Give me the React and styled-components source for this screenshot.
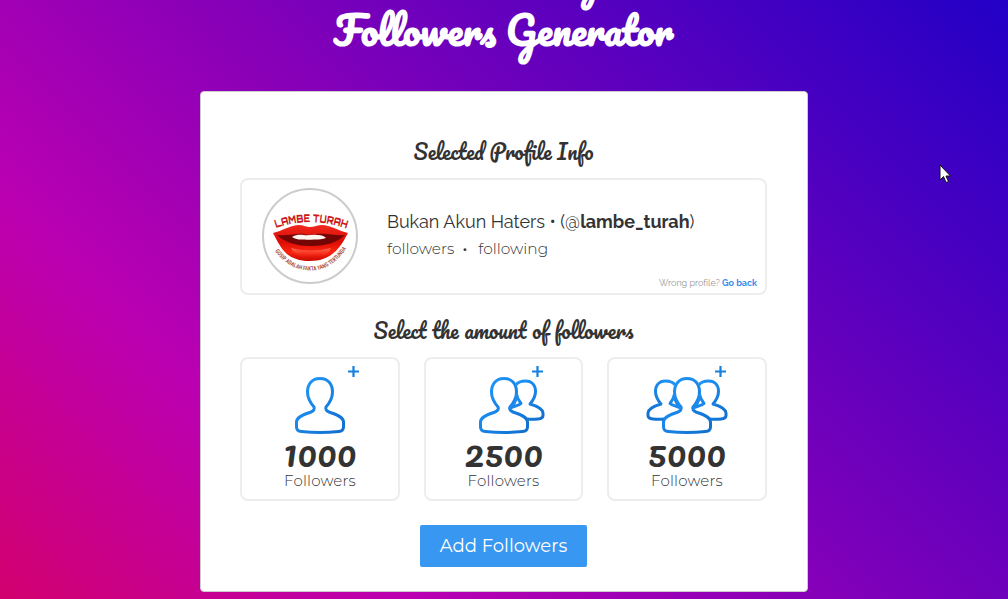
import React from "react";
import styled, { createGlobalStyle } from "styled-components";

const GlobalStyle = createGlobalStyle`
  * {
    box-sizing: border-box;
  }

  body {
    margin: 0;
    height: 599px;
    overflow: hidden;
    background: linear-gradient(45deg, #d2006e 0%, #bb00b1 25%, #2200c6 100%);
    color: #333;
    font-family: Montserrat, "Open Sans", sans-serif;
  }
`;

const script = `Pacifico, Lato, sans-serif`;
const raleway = `Raleway, Lato, sans-serif`;
const montserrat = `Montserrat, "Open Sans", sans-serif`;

const Page = styled.div`
  height: 599px;
  overflow: hidden;
  display: flex;
  flex-direction: column;
  align-items: center;
`;

const Title = styled.h1`
  height: 91px;
  margin: 0;
  display: flex;
  flex-direction: column;
  justify-content: flex-end;
  align-items: center;
  padding: 0 1px 34px 0;
  color: #fff;
  font: 700 38.400px/54px ${script};
  white-space: nowrap;

  span:first-child {
    padding-left: 64px;
  }
`;

const Card = styled.main`
  width: 608px;
  height: 501px;
  flex: none;
  padding: 42px 40px 0 39px;
  display: flex;
  flex-direction: column;
  align-items: center;
  background: #fff;
  border: 1px solid #ccc;
  border-radius: 4px;
`;

const Heading = styled.h2`
  margin: 0 0 10px;
  height: 34px;
  font: 400 20.500px/34px ${script};
  white-space: nowrap;
`;

const Profile = styled.section`
  width: 527px;
  height: 117px;
  flex: none;
  display: grid;
  grid-template-columns: 125px 1fr;
  grid-template-rows: 88px 1fr;
  padding: 8px 8px 0 20px;
  border: 2px solid #ededed;
  border-radius: 8px;
  margin-bottom: 18px;
`;

const Avatar = styled.div`
  grid-row: 1 / 3;
  width: 96px;
  height: 96px;
  border: 2px solid #ccc;
  border-radius: 50%;
  overflow: hidden;

  svg {
    display: block;
  }
`;

const Details = styled.div`
  padding-top: 20px;
  white-space: nowrap;
`;

const Name = styled.div`
  height: 28px;
  font: 400 18px/28px ${raleway};
  letter-spacing: -0.030px;
`;

const Counts = styled.div`
  display: flex;
  color: #333;
  font: 300 15.400px/26px ${montserrat};

  span:nth-child(2) {
    margin: 0 11px 0 8px;
    font-weight: 500;
  }
`;

const WrongProfile = styled.div`
  justify-self: end;
  height: 14px;
  color: #999;
  font: 400 9px/14px ${raleway};
  letter-spacing: -0.030px;
  white-space: nowrap;

  a {
    color: #3a8cee;
    font-weight: 700;
  }
`;

const Options = styled.div`
  width: 527px;
  display: grid;
  grid-template-columns: 160px 159px 160px;
  justify-content: space-between;
  margin-bottom: 24px;
`;

const Option = styled.div`
  height: 144px;
  display: flex;
  flex-direction: column;
  align-items: center;
  border: 2px solid #ededed;
  border-radius: 8px;

  svg {
    flex: none;
    margin-top: 7px;
  }
`;

const Amount = styled.div`
  margin-top: 2px;
  height: 34px;
  font: 400 36.500px/30px ${script};
`;

const Unit = styled.div`
  color: #333;
  font: 300 15px/20px ${montserrat};
  letter-spacing: 0.2px;
`;

const AddButton = styled.button`
  width: 167px;
  height: 42px;
  flex: none;
  padding: 0;
  border: 0;
  border-radius: 2px;
  background: #3897f0;
  color: #fff;
  font: 400 18px/42px ${montserrat};
`;

const Pointer = styled.svg`
  position: absolute;
  left: 939px;
  top: 164px;
`;

const FRONT = "M46 12.500c-8 0-12.500 5.500-12.500 13.500 0 6 3 11 6.500 15 1 2-.5 4-3 5-8.500 2.800-14.500 5.500-14.500 10v5c0 3 2 4.300 5 4.600 12 1.200 25 1.200 37 0 3-.3 5-1.600 5-4.600v-5c0-4.500-6-7.200-14.500-10-2.500-1-4-3-3-5 3.500-4 6.500-9 6.500-15 0-8-4.500-13.500-12.500-13.500z";
const BACK = "M58 19c2-3 5-4 9.500-4 6.500 0 10 4.500 10 10.500 0 4.800-2.500 9-5.500 12.500 6.500 2 13 4.500 13 9v2.500c0 2.500-2.500 3.300-5 3.500-4 .4-7 .4-11 .1M58.500 28c.5 3.500 2 6.500 4.500 9.500-2 2-6 2.500-10.500 4.500 3-3 5-6.500 6.300-10.500";

const PeopleIcon = ({ count }) => (
	<svg width="92" height="69" viewBox="0 0 92 69" fill="none">
		<defs>
			<linearGradient id={`blue-${count}`} x1="0" y1="0" x2="1" y2="1">
				<stop offset="0" stopColor="#2199fc"/>
				<stop offset="1" stopColor="#106fcf"/>
			</linearGradient>
		</defs>
		<g stroke={`url(#blue-${count})`} strokeWidth="3" strokeLinejoin="round">
			<path d={FRONT}/>
			{count > 1 && <path d={BACK}/>}
			{count > 2 && <path d={BACK} transform="translate(92 0) scale(-1 1)"/>}
		</g>
		<path d="M79.500 0v11M74 5.500h11" stroke="#1680df" strokeWidth="2.200"/>
	</svg>
);

const Lips = () => (
	<svg width="92" height="92" viewBox="0 0 92 92">
		<defs>
			<linearGradient id="lip" x2="0" y2="1">
				<stop offset="0" stopColor="#f02a20"/>
				<stop offset=".45" stopColor="#db0b02"/>
				<stop offset=".75" stopColor="#fb2512"/>
				<stop offset="1" stopColor="#c80900"/>
			</linearGradient>
			<linearGradient id="shine" x2="0" y2="1">
				<stop offset="0" stopColor="#ff8a72" stopOpacity=".75"/>
				<stop offset="1" stopColor="#fa2818" stopOpacity="0"/>
			</linearGradient>
			<path id="top-arc" d="M12 38Q46 26 84 39"/>
			<path id="bottom-arc" d="M11 61Q25 80 46 80.500T82 59"/>
		</defs>
		<text fill="#cc1719" fontFamily="Orbitron, Inter, sans-serif" fontSize="11" fontWeight="900">
			<textPath href="#top-arc" textLength="72" lengthAdjust="spacingAndGlyphs">LAMBE TURAH</textPath>
		</text>
		<path d="M9 43C18 41 27 35 35 35c4 0 7 2 11 2s8-2 12-2c8 0 17 6 26 8-6 11-14 28-38 28S17 58 9 43z" fill="url(#lip)"/>
		<path d="M13 45c14 1 20-2 27-1 6 2 9 0 14 0 10-1 17 2 27 1-8 7-17 11-34 11S19 51 13 45z" fill="#730504"/>
		<path d="M28 47c5-3 9-2 12-2 4 1 9-1 13 0 5 0 7 1 9 3-4 1-7 1.500-10 1.500-4-.5-8 1-11 0-5 0-9 .5-13-2.500z" fill="#fff4f0"/>
		<path d="M27 58q19 5 40 0c-3 8-11 10-20 10s-17-3-20-10z" fill="url(#shine)"/>
		<text fill="#a75045" fontFamily="'Roboto Condensed', Roboto, sans-serif" fontSize="6" fontWeight="600">
			<textPath href="#bottom-arc" textLength="86" lengthAdjust="spacingAndGlyphs">GOSIP ADALAH FAKTA YANG TERTUNDA</textPath>
		</text>
	</svg>
);

const options = [
	{ amount: 1000, people: 1 },
	{ amount: 2500, people: 2 },
	{ amount: 5000, people: 3 },
];

const App = () => (
	<>
		<GlobalStyle/>
		<Page>
			<Title>
				<span>Free Instagram</span>
				<span>Followers Generator</span>
			</Title>
			<Card>
				<Heading>Selected Profile Info</Heading>
				<Profile>
					<Avatar><Lips/></Avatar>
					<Details>
						<Name>Bukan Akun Haters • (@<strong>lambe_turah</strong>)</Name>
						<Counts><span>followers</span><span>•</span><span>following</span></Counts>
					</Details>
					<WrongProfile>Wrong profile? <a>Go back</a></WrongProfile>
				</Profile>
				<Heading>Select the amount of followers</Heading>
				<Options>
					{options.map(({ amount, people }) => (
						<Option key={amount}>
							<PeopleIcon count={people}/>
							<Amount>{amount}</Amount>
							<Unit>Followers</Unit>
						</Option>
					))}
				</Options>
				<AddButton>Add Followers</AddButton>
			</Card>
			<Pointer width="12" height="20" viewBox="0 0 12 20">
				<path d="M1 1v15l3.500-3.500L7 18.500l2.500-1L7 12h4.500z" fill="#fff" stroke="#111" strokeWidth="1"/>
			</Pointer>
		</Page>
	</>
);

export default App;
